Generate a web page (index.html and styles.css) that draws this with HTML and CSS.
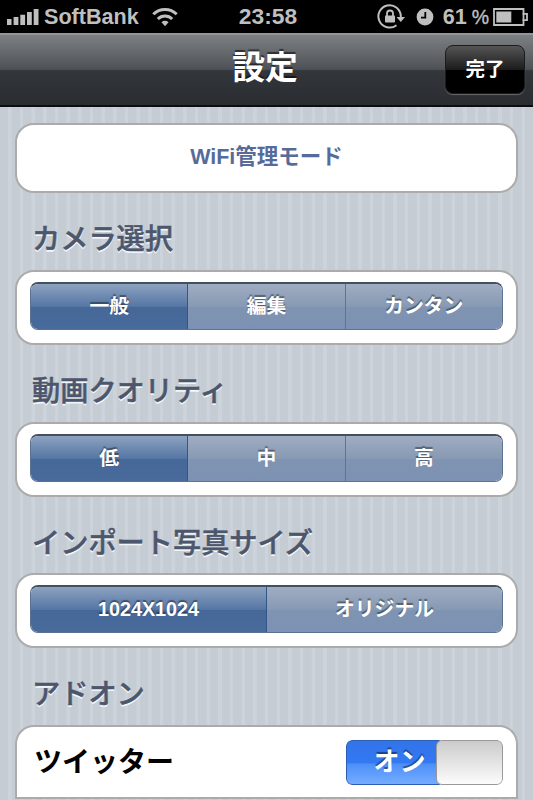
FILE: index.html
```html
<!DOCTYPE html>
<html lang="ja">
<head>
  <meta charset="UTF-8" />
  <meta name="viewport" content="width=device-width, initial-scale=1" />
  <title>設定</title>
  <link rel="stylesheet" href="styles.css">
</head>
<body>
  <div class="status-bar">
    <div class="status-left">
      <svg class="signal" width="32" height="18" viewBox="0 0 32 18" fill="#bfbfbf">
        <path d="M0 11h4.500v6H0zM6.600 9h4.800v8H6.600zM13.300 6.700h4.800v10.300h-4.800zM20 4h4.800v13H20zM26.700 1h4.800v16h-4.800z"/>
      </svg>
      <span class="carrier">SoftBank</span>
      <svg class="wifi" width="26" height="20" viewBox="0 0 26 20" fill="none" stroke="#bfbfbf" stroke-width="3">
        <path d="M1.300 7.300a16.500 16.500 0 0 1 23.400 0M5.800 12a10.200 10.200 0 0 1 14.400 0"/>
        <path d="M13 19.300l-3.500-4a5 5 0 0 1 7 0z" fill="#bfbfbf" stroke="none"/>
      </svg>
    </div>
    <span class="clock">23:58</span>
    <div class="status-right">
      <svg width="29" height="26" viewBox="0 0 29 26">
        <path d="M19.500 21.200A11.200 11.200 0 1 1 23.800 12.500V14" fill="none" stroke="#bfbfbf" stroke-width="2"/>
        <path d="M19.500 13H28l-4.200 5z" fill="#bfbfbf"/>
        <rect x="8" y="11.500" width="10" height="7" rx=".8" fill="#bfbfbf"/>
        <path d="M10 12V9.500a3 3 0 0 1 6 0V12" fill="none" stroke="#bfbfbf" stroke-width="1.800"/>
      </svg>
      <svg class="alarm" width="18" height="18" viewBox="0 0 18 18">
        <circle cx="9" cy="9" r="8.400" fill="#bfbfbf"/>
        <path d="M9.300 4v5.700H5" fill="none" stroke="#000" stroke-width="1.800"/>
      </svg>
      <span class="percent">61<i>%</i></span>
      <svg class="battery" width="36" height="18" viewBox="0 0 36 18">
        <path d="M1 1h29.500v4.800H34v6.400h-3.500V17H1z" fill="none" stroke="#bfbfbf" stroke-width="1.800"/>
        <path d="M3.300 3.500h15v11h-15z" fill="#bfbfbf"/>
        <path d="M30.500 5v8" stroke="#bfbfbf" stroke-width="1.800"/>
      </svg>
    </div>
  </div>

  <header class="nav-bar">
    <h1>設定</h1>
    <button class="done-btn">完了</button>
  </header>

  <main>
    <div class="card link-card">WiFi管理モード</div>

    <h2>カメラ選択</h2>
    <div class="card">
      <div class="segments">
        <div class="segment active">一般</div>
        <div class="segment">編集</div>
        <div class="segment">カンタン</div>
      </div>
    </div>

    <h2>動画クオリティ</h2>
    <div class="card">
      <div class="segments">
        <div class="segment active">低</div>
        <div class="segment">中</div>
        <div class="segment">高</div>
      </div>
    </div>

    <h2>インポート写真サイズ</h2>
    <div class="card">
      <div class="segments">
        <div class="segment active">1024X1024</div>
        <div class="segment">オリジナル</div>
      </div>
    </div>

    <h2>アドオン</h2>
    <div class="card list-card">
      <div class="row">
        <span class="row-label">ツイッター</span>
        <div class="switch">
          <div class="switch-on">オン</div>
          <div class="knob"></div>
        </div>
      </div>
    </div>
  </main>
</body>
</html>
```
FILE: styles.css
```css
* {
  box-sizing: border-box;
}
body {
  margin: 0;
  height: 800px;
  overflow: hidden;
  display: flex;
  flex-direction: column;
  font-family: "Liberation Sans", "Noto Sans CJK JP", sans-serif;
  font-weight: bold;
  background: #c5ccd4;
}
.status-bar {
  flex: none;
  height: 33px;
  background: #000;
  color: #bfbfbf;
  font-size: 21.600px;
  line-height: 32px;
  display: grid;
  grid-template-columns: 1fr auto 1fr;
  padding: 0 4px 0 7px;
}
.status-left,
.status-right {
  display: flex;
  align-items: center;
}
.status-right {
  justify-content: flex-end;
}
.carrier {
  margin-left: 5px;
}
.wifi {
  margin-left: 13px;
}
.clock {
  font-size: 22.800px;
}
.alarm {
  margin: 0 9px 0 10px;
}
.percent i {
  font-style: normal;
  font-weight: normal;
  font-size: 19.500px;
  margin-left: 5px;
  -webkit-text-stroke: 0.4px #bfbfbf;
}
.battery {
  margin-left: 4px;
}
.nav-bar {
  flex: none;
  position: relative;
  height: 74px;
  background: linear-gradient(#7d8083, #4e5256 49%, #33363b 51%, #292c30);
  border-top: 2px solid #949699;
  border-bottom: 2px solid #0c0d0f;
  display: flex;
  justify-content: center;
}
.nav-bar h1 {
  margin: 0;
  padding-right: 3px;
  font-size: 32.800px;
  line-height: 65px;
  color: #fff;
  text-shadow: 0 -2px 1px rgba(0, 0, 0, 0.55);
}
.done-btn {
  position: absolute;
  top: 10px;
  right: 8px;
  width: 80px;
  height: 49px;
  padding: 0 0 4px;
  border: 1px solid #1b1c1e;
  border-radius: 8px;
  background: linear-gradient(#555, #1c1c1c 50%, #000 51%);
  box-shadow: 0 1px 1px #67696c;
  color: #fff;
  font-family: inherit;
  font-size: 19.500px;
  font-weight: bold;
}
main {
  flex: 1;
  min-height: 0;
  padding: 16px 15px 0;
  background: repeating-linear-gradient(90deg, #c5ccd4 0, #c5ccd4 8px, #ccd3da 8.300px, #ccd3da 11.400px, #c5ccd4 11.670px);
}
.card {
  height: 75px;
  padding: 10px 13px;
  background: #fff;
  border: 2px solid #ababab;
  border-radius: 19px;
}
.link-card {
  height: 70px;
  padding: 0;
  text-align: center;
  font-size: 21.500px;
  line-height: 65px;
  color: #576b9a;
}
h2 {
  margin: 0;
  height: 76.800px;
  padding-left: 17px;
  font-size: 28.200px;
  font-weight: 500;
  line-height: 92px;
  color: #4c566c;
  -webkit-text-stroke: 0.5px #4c566c;
  text-shadow: 0 2px 0 #f2f5f8;
}
.segments {
  display: flex;
  height: 48px;
  border-radius: 8px;
  overflow: hidden;
  border: 1px solid #5b7292;
  border-top: 2px solid #45505f;
}
.segment {
  flex: 1;
  text-align: center;
  font-size: 19.800px;
  line-height: 44px;
  color: #fff;
  background: linear-gradient(#9fadc2, #8799b3 50%, #7f94b2 51%, #7d92b2);
  text-shadow: 0 -2px 1px rgba(0, 0, 0, 0.4);
}
.segment + .segment {
  border-left: 1px solid #5d7492;
}
.segment.active {
  background: linear-gradient(#8da2c0, #5576a4 50%, #466898 51%, #496b9c);
}
.segment.active + .segment {
  border-left: 1px solid #31568a;
}
.list-card {
  height: 74px;
  padding: 0;
  border-bottom: 0;
  border-radius: 19px 19px 0 0;
}
.row {
  display: flex;
  justify-content: space-between;
  align-items: center;
  height: 72px;
  padding: 0 13px 0 17px;
  font-size: 28px;
  border-bottom: 2px solid #ababab;
}
.row-label {
  padding-bottom: 4px;
}
.switch {
  display: flex;
  width: 157px;
  height: 45px;
  border-radius: 6px;
  overflow: hidden;
}
.switch-on {
  flex: 1;
  padding-left: 13px;
  margin-right: -4px;
  text-align: center;
  font-size: 26px;
  line-height: 43px;
  color: #fff;
  background: linear-gradient(#3274ea, #3379f2 50%, #4e90fa 54%, #74acff);
  border: 1px solid #2d5eb5;
  border-radius: 6px 0 0 6px;
  text-shadow: 0 -2px 1px rgba(0, 0, 0, 0.45);
}
.knob {
  width: 67px;
  border: 1px solid #999;
  border-radius: 6px;
  background: linear-gradient(#cbcbcb, #fcfcfc);
}
```
